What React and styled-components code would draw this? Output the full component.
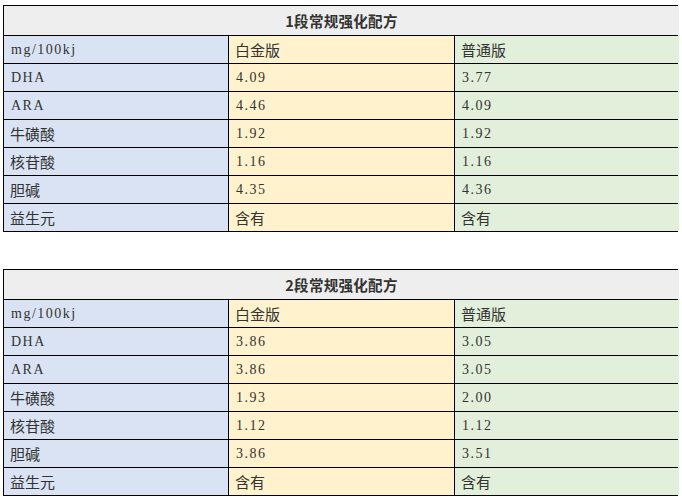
import React from "react";
import styled, { createGlobalStyle } from "styled-components";

const GlobalStyle = createGlobalStyle`
  body {
    margin: 0;
    background: #ffffff;
    font-family: "Noto Sans CJK SC", "Liberation Sans", sans-serif;
  }
`;

const colors = {
  border: "#000000",
  head: "#eeeeee",
  blue: "#dae3f3",
  yellow: "#fff2cc",
  green: "#e2efda",
  text: "#333333",
};

const Page = styled.div`
  padding: 5px 0 0 3px;
  display: flex;
  flex-direction: column;
  gap: 37px;
`;

const Grid = styled.div`
  display: grid;
  grid-template-columns: 224px 225px 224px;
  grid-template-rows: 29px;
  grid-auto-rows: 27px;
  gap: 1px;
  padding: 1px;
  width: 673px;
  background: ${colors.border};
`;

const Title = styled.div`
  grid-column: 1 / span 3;
  display: flex;
  align-items: center;
  justify-content: center;
  background: ${colors.head};
  color: ${colors.text};
  font-weight: 700;
  font-size: 14.5px;
  letter-spacing: 0.3px;
`;

const Cell = styled.div`
  display: flex;
  align-items: center;
  padding-left: ${(p) => (p.$latin ? "7px" : "6px")};
  background: ${(p) => p.$bg};
  color: ${colors.text};
  font-family: ${(p) =>
    p.$latin
      ? `"Liberation Serif", "Noto Sans CJK SC", serif`
      : `"Noto Sans CJK SC", sans-serif`};
  font-size: ${(p) => (p.$latin ? "14px" : "15px")};
  letter-spacing: ${(p) => (p.$latin ? "1.5px" : "0")};
  white-space: nowrap;
`;

const isLatin = (s) => /^[\x00-\x7f]+$/.test(s);

const tables = [
  {
    title: "1段常规强化配方",
    rows: [
      ["mg/100kj", "白金版", "普通版"],
      ["DHA", "4.09", "3.77"],
      ["ARA", "4.46", "4.09"],
      ["牛磺酸", "1.92", "1.92"],
      ["核苷酸", "1.16", "1.16"],
      ["胆碱", "4.35", "4.36"],
      ["益生元", "含有", "含有"],
    ],
  },
  {
    title: "2段常规强化配方",
    rows: [
      ["mg/100kj", "白金版", "普通版"],
      ["DHA", "3.86", "3.05"],
      ["ARA", "3.86", "3.05"],
      ["牛磺酸", "1.93", "2.00"],
      ["核苷酸", "1.12", "1.12"],
      ["胆碱", "3.86", "3.51"],
      ["益生元", "含有", "含有"],
    ],
  },
];

const columnColors = [colors.blue, colors.yellow, colors.green];

const FormulaTable = ({ title, rows }) => (
  <Grid>
    <Title>{title}</Title>
    {rows.map((row, r) =>
      row.map((value, c) => (
        <Cell key={r + "-" + c} $bg={columnColors[c]} $latin={isLatin(value)}>
          {value}
        </Cell>
      ))
    )}
  </Grid>
);

export default function App() {
  return (
    <>
      <GlobalStyle />
      <Page>
        {tables.map((t) => (
          <FormulaTable key={t.title} title={t.title} rows={t.rows} />
        ))}
      </Page>
    </>
  );
}
